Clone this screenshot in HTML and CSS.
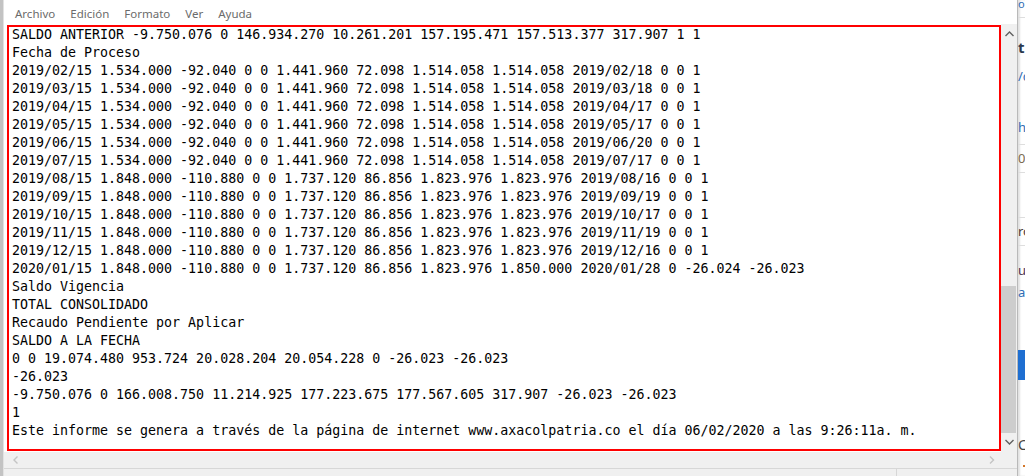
FILE: index.html
```html
<!DOCTYPE html>
<html lang="es">
<head>
<meta charset="utf-8">
<title>Bloc de notas</title>
<link rel="stylesheet" href="styles.css">
</head>
<body>
<div class="screen">
  <div class="edge"></div>
  <div class="notepad">
    <div class="menubar">
      <span class="menu-item">Archivo</span>
      <span class="menu-item">Edición</span>
      <span class="menu-item">Formato</span>
      <span class="menu-item">Ver</span>
      <span class="menu-item">Ayuda</span>
    </div>
    <div class="editor-row">
<pre class="editor">SALDO ANTERIOR -9.750.076 0 146.934.270 10.261.201 157.195.471 157.513.377 317.907 1 1
Fecha de Proceso
2019/02/15 1.534.000 -92.040 0 0 1.441.960 72.098 1.514.058 1.514.058 2019/02/18 0 0 1
2019/03/15 1.534.000 -92.040 0 0 1.441.960 72.098 1.514.058 1.514.058 2019/03/18 0 0 1
2019/04/15 1.534.000 -92.040 0 0 1.441.960 72.098 1.514.058 1.514.058 2019/04/17 0 0 1
2019/05/15 1.534.000 -92.040 0 0 1.441.960 72.098 1.514.058 1.514.058 2019/05/17 0 0 1
2019/06/15 1.534.000 -92.040 0 0 1.441.960 72.098 1.514.058 1.514.058 2019/06/20 0 0 1
2019/07/15 1.534.000 -92.040 0 0 1.441.960 72.098 1.514.058 1.514.058 2019/07/17 0 0 1
2019/08/15 1.848.000 -110.880 0 0 1.737.120 86.856 1.823.976 1.823.976 2019/08/16 0 0 1
2019/09/15 1.848.000 -110.880 0 0 1.737.120 86.856 1.823.976 1.823.976 2019/09/19 0 0 1
2019/10/15 1.848.000 -110.880 0 0 1.737.120 86.856 1.823.976 1.823.976 2019/10/17 0 0 1
2019/11/15 1.848.000 -110.880 0 0 1.737.120 86.856 1.823.976 1.823.976 2019/11/19 0 0 1
2019/12/15 1.848.000 -110.880 0 0 1.737.120 86.856 1.823.976 1.823.976 2019/12/16 0 0 1
2020/01/15 1.848.000 -110.880 0 0 1.737.120 86.856 1.823.976 1.850.000 2020/01/28 0 -26.024 -26.023
Saldo Vigencia
TOTAL CONSOLIDADO
Recaudo Pendiente por Aplicar
SALDO A LA FECHA
0 0 19.074.480 953.724 20.028.204 20.054.228 0 -26.023 -26.023
-26.023
-9.750.076 0 166.008.750 11.214.925 177.223.675 177.567.605 317.907 -26.023 -26.023
1
Este informe se genera a través de la página de internet www.axacolpatria.co el día 06/02/2020 a las 9:26:11a. m.</pre>
      <div class="vscroll">
        <div class="vbtn vbtn-up">
          <svg width="16" height="17" viewBox="0 0 16 17"><polyline points="4.5,12 8.5,8 12.5,12" class="chev"/></svg>
        </div>
        <div class="vtrack"><div class="vthumb"></div></div>
        <div class="vbtn vbtn-down">
          <svg width="16" height="17" viewBox="0 0 16 17"><polyline points="4.5,5 8.5,9 12.5,5" class="chev"/></svg>
        </div>
      </div>
    </div>
    <div class="hscroll-row">
      <div class="hscroll">
        <svg class="hbtn-left" width="16" height="16" viewBox="0 0 16 16"><polyline points="7.5,4.5 4,8 7.5,11.5" class="chev chev-off"/></svg>
        <svg class="hbtn-right" width="16" height="16" viewBox="0 0 16 16"><polyline points="9,4.5 12.5,8 9,11.5" class="chev chev-off"/></svg>
      </div>
      <div class="corner"></div>
    </div>
    <div class="statusbar">
      <div class="status-cell"></div>
      <div class="status-rest"></div>
    </div>
  </div>
  <div class="other-window">
    <div class="ow-seg ow-a"><span class="ow-blue">o</span></div>
    <div class="ow-seg ow-b">
      <div class="ow-line ow-t">t</div>
      <div class="ow-line ow-c ow-blue">/c</div>
      <div class="ow-line ow-hi ow-blue">hi</div>
    </div>
    <div class="ow-seg ow-cc"><span class="ow-brown">0</span></div>
    <div class="ow-seg ow-d"></div>
    <div class="ow-seg ow-e">ro</div>
    <div class="ow-seg ow-f">
      <div class="ow-line ow-u">u</div>
      <div class="ow-line ow-a2 ow-blue">a</div>
    </div>
    <div class="ow-bar"></div>
    <div class="ow-seg ow-h">
      <div class="ow-line ow-C">C</div>
      <div class="ow-mark"></div>
    </div>
  </div>
  <div class="highlight"></div>
</div>
</body>
</html>
```

FILE: styles.css
```css
* { box-sizing: border-box; }
html, body { margin: 0; padding: 0; }
body {
  width: 1025px;
  height: 476px;
  overflow: hidden;
  background: #ffffff;
}
.screen {
  position: relative;
  display: flex;
  width: 1025px;
  height: 476px;
}
.edge {
  flex: 0 0 4px;
  background: #c3c3c3;
  border-right: 1px solid #e2e2e2;
}
.notepad {
  flex: 0 0 1013px;
  display: flex;
  flex-direction: column;
  background: #ffffff;
}
.menubar {
  height: 24px;
  padding: 4px 0 0 11px;
  display: flex;
  gap: 15px;
  font-family: "Noto Sans", "Open Sans", sans-serif;
  font-size: 11.5px;
  line-height: 20px;
  color: #6b6b6b;
  white-space: nowrap;
}
.editor-row {
  height: 428px;
  display: flex;
}
.editor {
  flex: 1 1 auto;
  margin: 0;
  padding: 2px 0 0 8px;
  font-family: "DejaVu Sans Mono", "Liberation Mono", monospace;
  font-size: 13.3px;
  line-height: 18px;
  color: #000000;
  white-space: pre;
  overflow: hidden;
}
.vscroll {
  flex: 0 0 16px;
  display: flex;
  flex-direction: column;
  background: #f0f0f0;
}
.vbtn { height: 17px; flex: 0 0 17px; }
.vbtn svg { display: block; }
.vtrack { flex: 1 1 auto; }
.vthumb {
  margin-top: 245px;
  width: 15px;
  height: 147px;
  background: #cdcdcd;
}
.chev {
  fill: none;
  stroke: #606060;
  stroke-width: 1.4;
}
.chev-off { stroke: #c4c4c4; }
.hscroll-row {
  height: 16px;
  display: flex;
}
.hscroll {
  flex: 1 1 auto;
  display: flex;
  justify-content: space-between;
  background: #f0f0f0;
}
.hbtn-left { margin-left: 6px; display: block; }
.hbtn-right { margin-right: 4px; display: block; }
.corner {
  flex: 0 0 16px;
  background: #f0f0f0;
}
.statusbar {
  flex: 1 1 auto;
  display: flex;
  background: #f0f0f0;
  border-top: 1px solid #d7d7d7;
}
.status-cell {
  flex: 0 0 893px;
  border-right: 1px solid #d7d7d7;
}
.status-rest { flex: 1 1 auto; }

.other-window {
  flex: 0 0 8px;
  display: flex;
  flex-direction: column;
  background: #ffffff;
  border-left: 1px solid #b9b9b9;
  box-shadow: inset 2px 0 2px rgba(0, 0, 0, 0.12);
  overflow: hidden;
  font-family: "Noto Sans", "Open Sans", sans-serif;
  font-size: 13px;
  color: #3a3a3a;
  white-space: nowrap;
}
.ow-seg { flex: 0 0 auto; border-bottom: 1px solid #dedede; }
.ow-line { height: 18px; line-height: 18px; }
.ow-blue { color: #2f6db5; }
.ow-brown { color: #7b6b4f; }
.ow-a { height: 18px; line-height: 8px; font-size: 11px; }
.ow-b { height: 127px; }
.ow-t { margin-top: 20px; font-weight: bold; font-size: 15px; color: #2c3a4f; }
.ow-c { margin-top: 11px; }
.ow-hi { margin-top: 33px; }
.ow-cc { height: 28px; line-height: 27px; }
.ow-d { height: 45px; }
.ow-e { height: 28px; line-height: 27px; color: #4a3b3b; }
.ow-f { height: 104px; border-bottom: none; }
.ow-u { margin-top: 15px; color: #4b3552; }
.ow-a2 { margin-top: 4px; }
.ow-bar { flex: 0 0 30px; background: #1f6fd1; }
.ow-h { flex: 1 1 auto; border-bottom: none; }
.ow-C { margin-top: 56px; color: #444444; font-size: 14px; }
.ow-mark {
  margin-top: 11px;
  margin-left: 5px;
  width: 3px;
  height: 2px;
  background: #d2772a;
}

.highlight {
  position: absolute;
  left: 7px;
  top: 25px;
  width: 994px;
  height: 426px;
  border: 2px solid #ff0000;
  pointer-events: none;
}
```
